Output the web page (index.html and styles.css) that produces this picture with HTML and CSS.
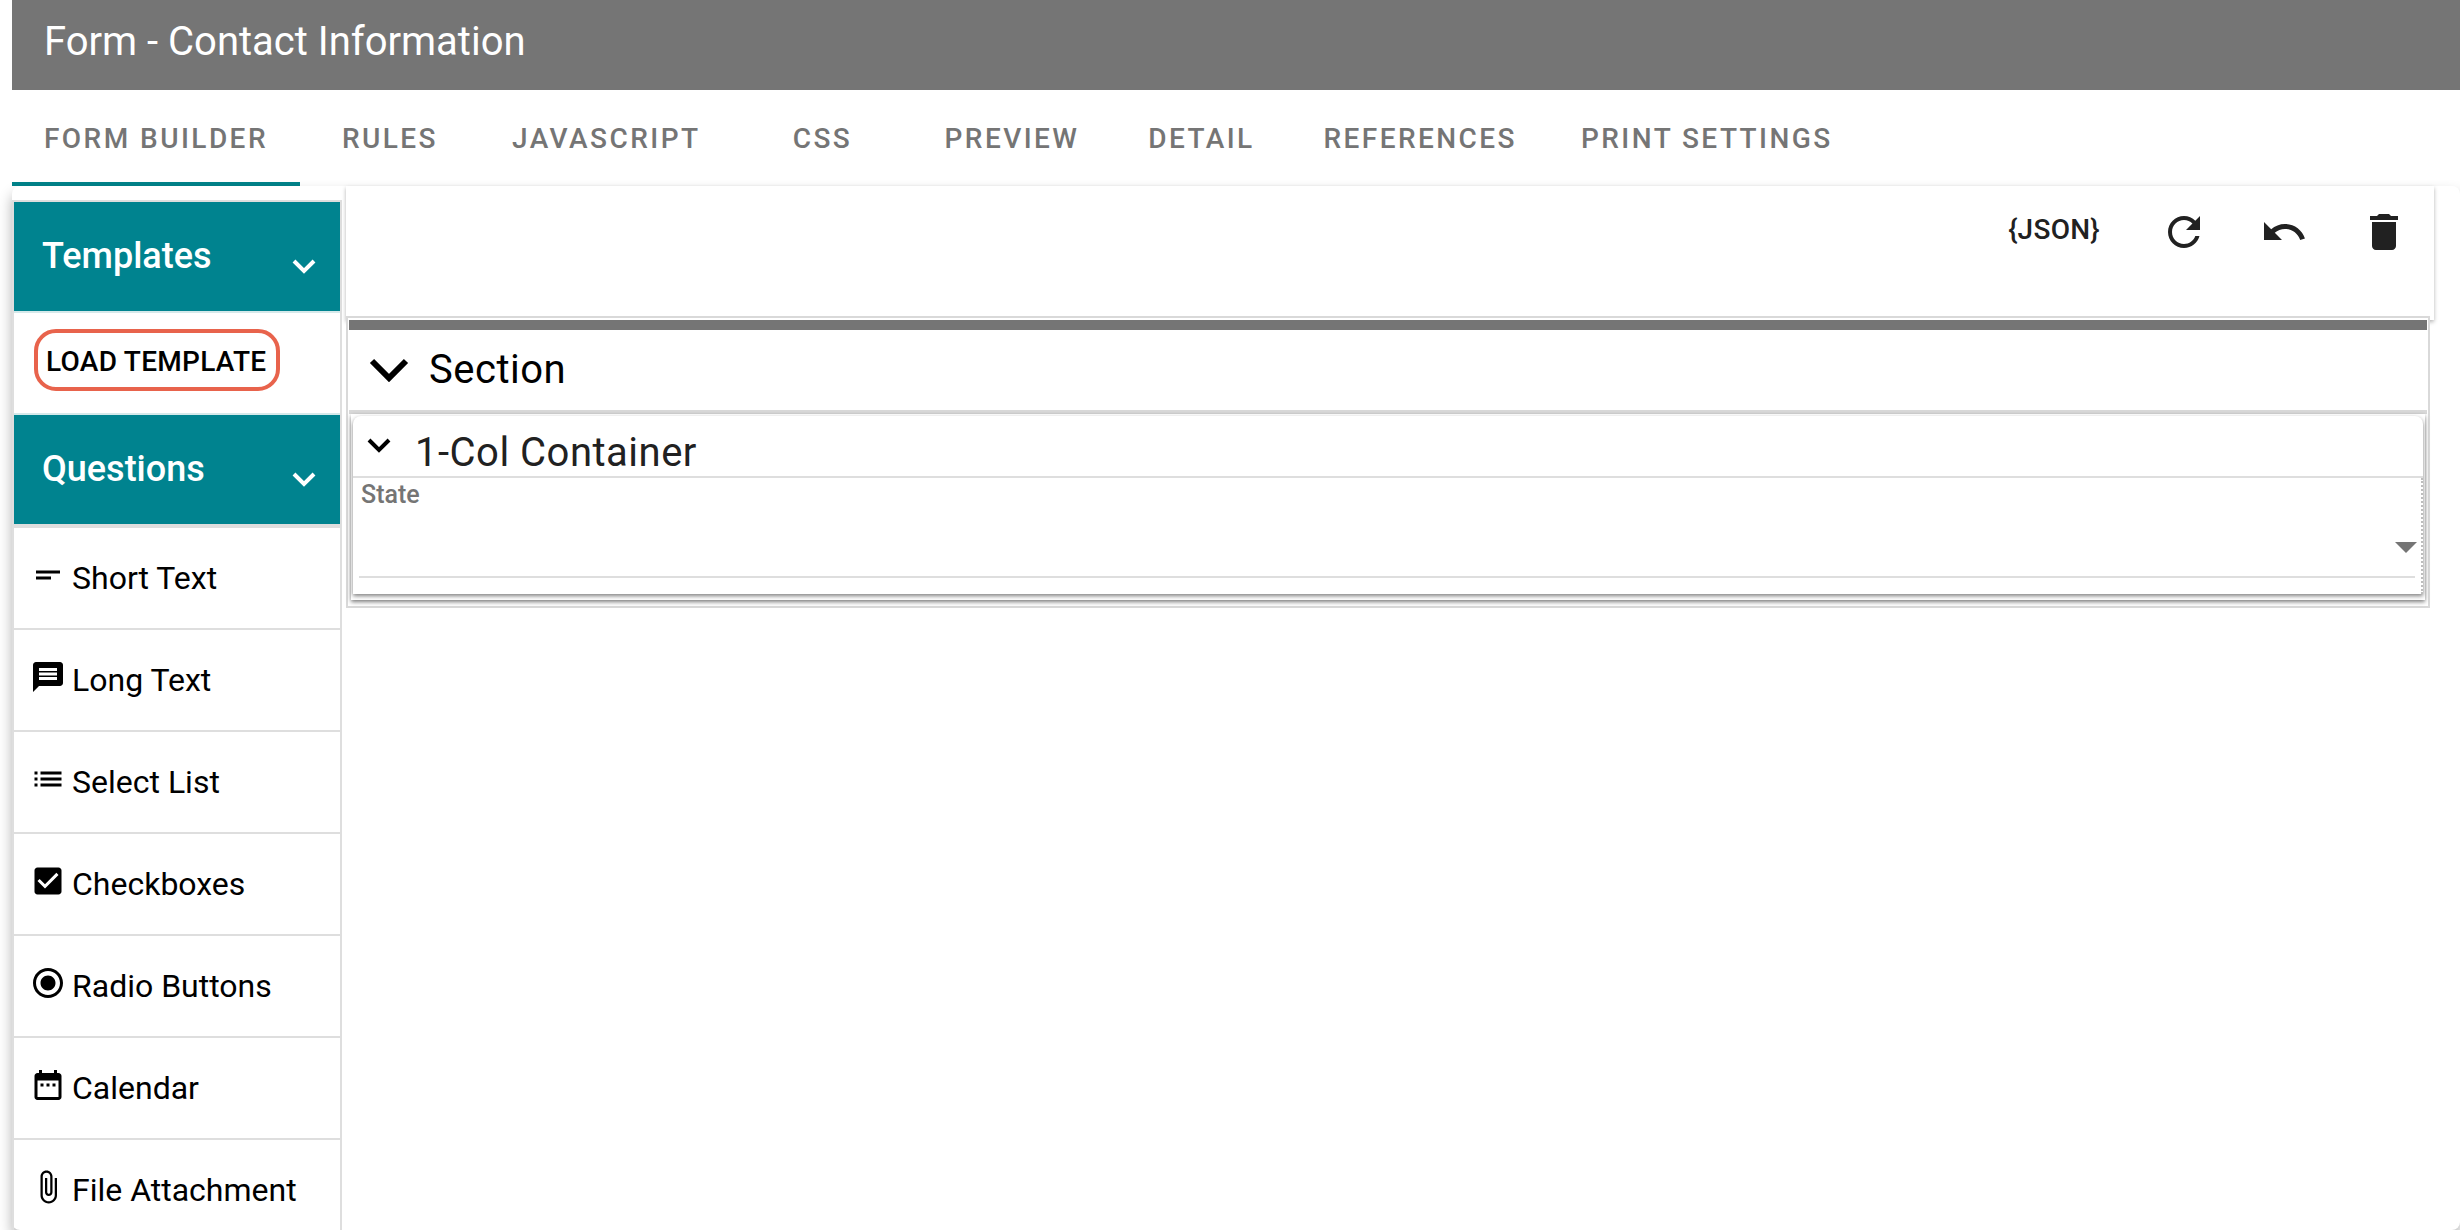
FILE: index.html
```
<!DOCTYPE html>
<html lang="en">
<head>
  <meta charset="UTF-8" />
  <meta name="viewport" content="width=device-width, initial-scale=1.0"/>
  <title>Form - Contact Information</title>
  <link rel="stylesheet" href="styles.css">
</head>
<body>

  <header class="header">
    <h1>Form - Contact Information</h1>
  </header>

  <nav class="tabs">
    <button class="tab active">FORM BUILDER</button>
    <button class="tab">RULES</button>
    <button class="tab">JAVASCRIPT</button>
    <button class="tab">CSS</button>
    <button class="tab">PREVIEW</button>
    <button class="tab">DETAIL</button>
    <button class="tab">REFERENCES</button>
    <button class="tab">PRINT SETTINGS</button>
  </nav>

  <div class="builder">
    <aside class="sidebar">
      <button class="group">
        Templates
        <svg class="chevron" viewBox="0 0 24 15"><path d="M2 2l10 10L22 2"/></svg>
      </button>
      <div class="template-row">
        <button class="load-btn">LOAD TEMPLATE</button>
      </div>
      <button class="group">
        Questions
        <svg class="chevron" viewBox="0 0 24 15"><path d="M2 2l10 10L22 2"/></svg>
      </button>
      <div class="questions">
        <button class="question">
          <svg viewBox="0 0 24 24"><path d="M4 9h16v2H4zM4 13h10v2H4z"/></svg>
          Short Text
        </button>
        <button class="question">
          <svg viewBox="0 0 24 24"><path d="M20 2H4c-1.1 0-1.99.9-1.99 2L2 22l4-4h14c1.1 0 2-.9 2-2V4c0-1.100-.9-2-2-2zM6 9h12v2H6V9zm12 5H6v-2h12v2zm0-6H6V6h12v2z"/></svg>
          Long Text
        </button>
        <button class="question">
          <svg viewBox="0 0 24 24"><path d="M3 13h2v-2H3v2zm0 4h2v-2H3v2zm0-8h2V7H3v2zm4 4h14v-2H7v2zm0 4h14v-2H7v2zM7 7v2h14V7H7z"/></svg>
          Select List
        </button>
        <button class="question">
          <svg viewBox="0 0 24 24"><path d="M19 3H5c-1.110 0-2 .9-2 2v14c0 1.100.890 2 2 2h14c1.110 0 2-.9 2-2V5c0-1.100-.890-2-2-2zm-9 14l-5-5 1.410-1.410L10 14.170l7.590-7.590L19 8l-9 9z"/></svg>
          Checkboxes
        </button>
        <button class="question">
          <svg viewBox="0 0 24 24"><path d="M12 7c-2.760 0-5 2.240-5 5s2.240 5 5 5 5-2.240 5-5-2.240-5-5-5zm0-5C6.480 2 2 6.480 2 12s4.480 10 10 10 10-4.480 10-10S17.520 2 12 2zm0 18c-4.420 0-8-3.580-8-8s3.580-8 8-8 8 3.580 8 8-3.580 8-8 8z"/></svg>
          Radio Buttons
        </button>
        <button class="question">
          <svg viewBox="0 0 24 24"><path d="M9 11H7v2h2v-2zm4 0h-2v2h2v-2zm4 0h-2v2h2v-2zm2-7h-1V2h-2v2H8V2H6v2H5c-1.110 0-1.990.9-1.990 2L3 20c0 1.100.890 2 2 2h14c1.100 0 2-.9 2-2V6c0-1.100-.9-2-2-2zm0 16H5V9h14v11z"/></svg>
          Calendar
        </button>
        <button class="question">
          <svg viewBox="0 0 24 24"><path d="M16.500 6v11.500c0 2.210-1.790 4-4 4s-4-1.790-4-4V5c0-1.380 1.120-2.500 2.500-2.500s2.500 1.120 2.500 2.500v10.500c0 .550-.450 1-1 1s-1-.450-1-1V6H10v9.500c0 1.380 1.120 2.500 2.500 2.500s2.500-1.120 2.500-2.500V5c0-2.210-1.790-4-4-4S7 2.790 7 5v12.500c0 3.040 2.460 5.500 5.500 5.500s5.500-2.460 5.500-5.500V6h-1.500z"/></svg>
          File Attachment
        </button>
      </div>
    </aside>

    <main class="canvas">
      <div class="toolbar">
        <button class="json-btn">{JSON}</button>
        <button class="icon-btn" aria-label="Refresh">
          <svg viewBox="0 0 24 24"><path d="M17.650 6.350C16.200 4.900 14.210 4 12 4c-4.420 0-7.990 3.580-7.990 8s3.570 8 7.990 8c3.730 0 6.840-2.550 7.730-6h-2.080c-.820 2.330-3.040 4-5.650 4-3.310 0-6-2.690-6-6s2.690-6 6-6c1.660 0 3.140.690 4.220 1.780L13 11h7V4l-2.350 2.350z"/></svg>
        </button>
        <button class="icon-btn" aria-label="Undo">
          <svg viewBox="0 0 24 24"><path d="M12.500 8c-2.650 0-5.050.990-6.900 2.600L2 7v9h9l-3.620-3.620c1.390-1.160 3.160-1.880 5.120-1.880 3.540 0 6.550 2.310 7.600 5.500l2.370-.780C21.080 11.030 17.150 8 12.500 8z"/></svg>
        </button>
        <button class="icon-btn" aria-label="Delete">
          <svg viewBox="0 0 24 24"><path d="M6 19c0 1.100.9 2 2 2h8c1.100 0 2-.9 2-2V7H6v12zM19 4h-3.500l-1-1h-5l-1 1H5v2h14V4z"/></svg>
        </button>
      </div>

      <section class="section">
        <div class="section-header">
          <svg class="section-chevron" viewBox="0 0 40 24"><path d="M3 3l17 17L37 3"/></svg>
          <h2>Section</h2>
        </div>
        <div class="container">
          <div class="container-card">
            <div class="container-header">
              <svg class="chevron" viewBox="0 0 24 15"><path d="M2 2l10 10L22 2"/></svg>
              <h3>1-Col Container</h3>
            </div>
            <div class="field">
              <label for="state">State</label>
              <div class="select-wrap">
                <select id="state"><option></option></select>
                <svg class="arrow" viewBox="0 0 20 10"><path d="M0 0h20L10 10z"/></svg>
              </div>
            </div>
          </div>
        </div>
      </section>
    </main>
  </div>

</body>
</html>
```
FILE: styles.css
```
* {
  box-sizing: border-box;
}

body {
  margin: 0;
  padding-left: 12px;
  height: 100vh;
  overflow: hidden;
  display: flex;
  flex-direction: column;
  font-family: Roboto, "Liberation Sans", sans-serif;
  background-color: #fff;
  color: #000;
}

h1, h2, h3 {
  margin: 0;
  font-weight: 400;
}

button {
  margin: 0;
  border: none;
  background: none;
  font-family: inherit;
  color: inherit;
  cursor: pointer;
}

.header {
  height: 90px;
  padding: 16px 32px;
  background-color: #757575;
  color: #fff;
  flex-shrink: 0;
}

.header h1 {
  font-size: 40px;
  line-height: 52px;
}

/* tabs */
.tabs {
  display: flex;
  height: 96px;
  flex-shrink: 0;
}

.tab {
  min-width: 180px;
  padding: 0 32px;
  border-top: 4px solid transparent;
  border-bottom: 4px solid transparent;
  font-size: 28px;
  font-weight: 500;
  letter-spacing: 0.0875em;
  color: #757575;
  white-space: nowrap;
}

.tab.active {
  border-bottom-color: #00838a;
}

.builder {
  flex: 1;
  min-height: 0;
  display: flex;
  border-radius: 8px;
  background-color: #fff;
  box-shadow: 0 8px 14px rgba(0, 0, 0, 0.3);
}

/* sidebar */
.sidebar {
  width: 330px;
  flex-shrink: 0;
  align-self: flex-start;
  margin-top: 14px;
  border: 2px solid #dedede;
}

.group {
  display: flex;
  justify-content: space-between;
  width: 100%;
  height: 109px;
  padding: 34px 24px 0 28px;
  background-color: #00838f;
  color: #fff;
  font-size: 36px;
  font-weight: 500;
  line-height: 40px;
}

.chevron {
  width: 24px;
  height: 15px;
  fill: none;
  stroke: currentColor;
  stroke-width: 4;
}

.group .chevron {
  margin-top: 23px;
}

.template-row {
  padding: 16px 20px 22px;
  border-top: 2px solid #d5e9ea;
  border-bottom: 2px solid #d5e9ea;
}

.load-btn {
  height: 62px;
  padding: 2px 10px 0 8px;
  border: 4px solid #e8634c;
  border-radius: 22px;
  font-size: 28px;
  font-weight: 500;
  letter-spacing: 0.01em;
  white-space: nowrap;
}

.questions {
  border-top: 2px solid #dedede;
}

.question {
  display: flex;
  gap: 6px;
  width: 100%;
  height: 102px;
  padding: 29px 16px 0;
  border-top: 2px solid #dedede;
  font-size: 32px;
  line-height: 42px;
  white-space: nowrap;
}

.question svg {
  width: 36px;
  height: 36px;
  flex-shrink: 0;
}

/* canvas */
.canvas {
  flex: 1;
  min-width: 0;
  padding-left: 4px;
}

.toolbar {
  display: flex;
  justify-content: flex-end;
  gap: 4px;
  height: 134px;
  margin-right: 26px;
  padding-right: 2px;
  color: #212121;
  box-shadow: 0 2px 4px rgba(0, 0, 0, 0.3);
}

.json-btn {
  height: 86px;
  padding: 0 32px;
  font-size: 28px;
  font-weight: 500;
  letter-spacing: 0.01em;
}

.icon-btn {
  width: 96px;
  height: 92px;
  padding: 22px 24px;
}

.icon-btn svg {
  display: block;
  width: 48px;
  height: 48px;
  fill: currentColor;
}

.section {
  position: relative;
  margin: -4px 30px 0 0;
  padding: 2px 1px 6px;
  border: 2px solid #d9d9d9;
  background-color: #fff;
}

.section-header {
  display: flex;
  gap: 20px;
  height: 94px;
  padding: 12px 20px 0;
  border-top: 10px solid #757575;
  border-bottom: 4px solid #d9d9d9;
}

.section-header h2 {
  font-size: 40px;
  line-height: 56px;
  letter-spacing: 0.0125em;
}

.section-chevron {
  width: 40px;
  height: 24px;
  margin-top: 16px;
  fill: none;
  stroke: currentColor;
  stroke-width: 6;
}

.container {
  margin: 0 2px;
  padding: 2px 2px 6px;
  box-shadow: 0 2px 4px rgba(0, 0, 0, 0.5);
}

.container-card {
  border-radius: 8px 8px 0 0;
  box-shadow: 0 2px 4px rgba(0, 0, 0, 0.5);
}

.container-header {
  display: flex;
  gap: 24px;
  height: 62px;
  padding: 8px 14px 0;
  border-bottom: 2px solid #dedede;
}

.container-header .chevron {
  margin-top: 14px;
}

.container-header h3 {
  font-size: 40px;
  line-height: 58px;
  letter-spacing: 0.0125em;
  color: #212121;
}

.field {
  height: 116px;
  padding: 2px 6px 16px;
  border-right: 2px dotted #bdbdbd;
}

.field label {
  display: block;
  padding-left: 2px;
  font-size: 25px;
  font-weight: 500;
  line-height: 30px;
  color: #757575;
}

.select-wrap {
  position: relative;
}

.select-wrap select {
  display: block;
  width: 100%;
  height: 68px;
  padding: 0 32px 0 4px;
  border: none;
  border-bottom: 2px solid #dedede;
  border-radius: 0;
  appearance: none;
  background: none;
  font-family: inherit;
  font-size: 32px;
}

.arrow {
  position: absolute;
  right: -2px;
  bottom: 25px;
  width: 22px;
  height: 11px;
  fill: #757575;
  pointer-events: none;
}
```
